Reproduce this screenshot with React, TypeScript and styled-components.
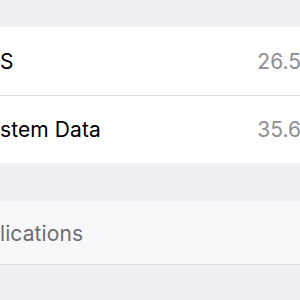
import React from "react";
import styled, { createGlobalStyle } from "styled-components";

const Global = createGlobalStyle`
  html, body { margin: 0; padding: 0; background: #efeff4; }
  body { width: 300px; height: 300px; overflow: hidden; font-family: Inter, "Liberation Sans", sans-serif; }
`;

const Page = styled.div`
  display: flex;
  flex-direction: column;
  width: 300px;
  height: 300px;
  background: #efeff4;
`;

const Spacer = styled.div<{ $h: number }>`
  height: ${(p) => p.$h}px;
  flex: none;
`;

const Group = styled.div<{ $muted?: boolean }>`
  display: flex;
  flex-direction: column;
  background: ${(p) => (p.$muted ? "#f7f7fa" : "#ffffff")};
  border-top: 1px solid ${(p) => (p.$muted ? "#fbfbfd" : "#ffffff")};
  border-bottom: 1px solid ${(p) => (p.$muted ? "#d9d9de" : "#ffffff")};
`;

const Row = styled.div<{ $h: number; $divider?: boolean }>`
  display: flex;
  align-items: center;
  justify-content: space-between;
  height: ${(p) => p.$h}px;
  border-bottom: ${(p) => (p.$divider ? "1px solid #e0e0e4" : "none")};
  padding-left: 0;
`;

const Label = styled.span<{ $muted?: boolean }>`
  font-size: 21px;
  color: ${(p) => (p.$muted ? "#6d6d72" : "#000000")};
  letter-spacing: 0.1px;
  white-space: nowrap;
`;

const Value = styled.span`
  font-size: 21px;
  color: #8e8e93;
  white-space: nowrap;
  margin-right: -1px;
`;

export default function App() {
  return (
    <>
      <Global />
      <Page>
        <Spacer $h={27} />
        <Group>
          <Row $h={67} $divider>
            <Label>S</Label>
            <Value>26.5</Value>
          </Row>
          <Row $h={66}>
            <Label>stem Data</Label>
            <Value>35.6</Value>
          </Row>
        </Group>
        <Spacer $h={39} />
        <Group $muted>
          <Row $h={61}>
            <Label $muted>lications</Label>
          </Row>
        </Group>
      </Page>
    </>
  );
}
